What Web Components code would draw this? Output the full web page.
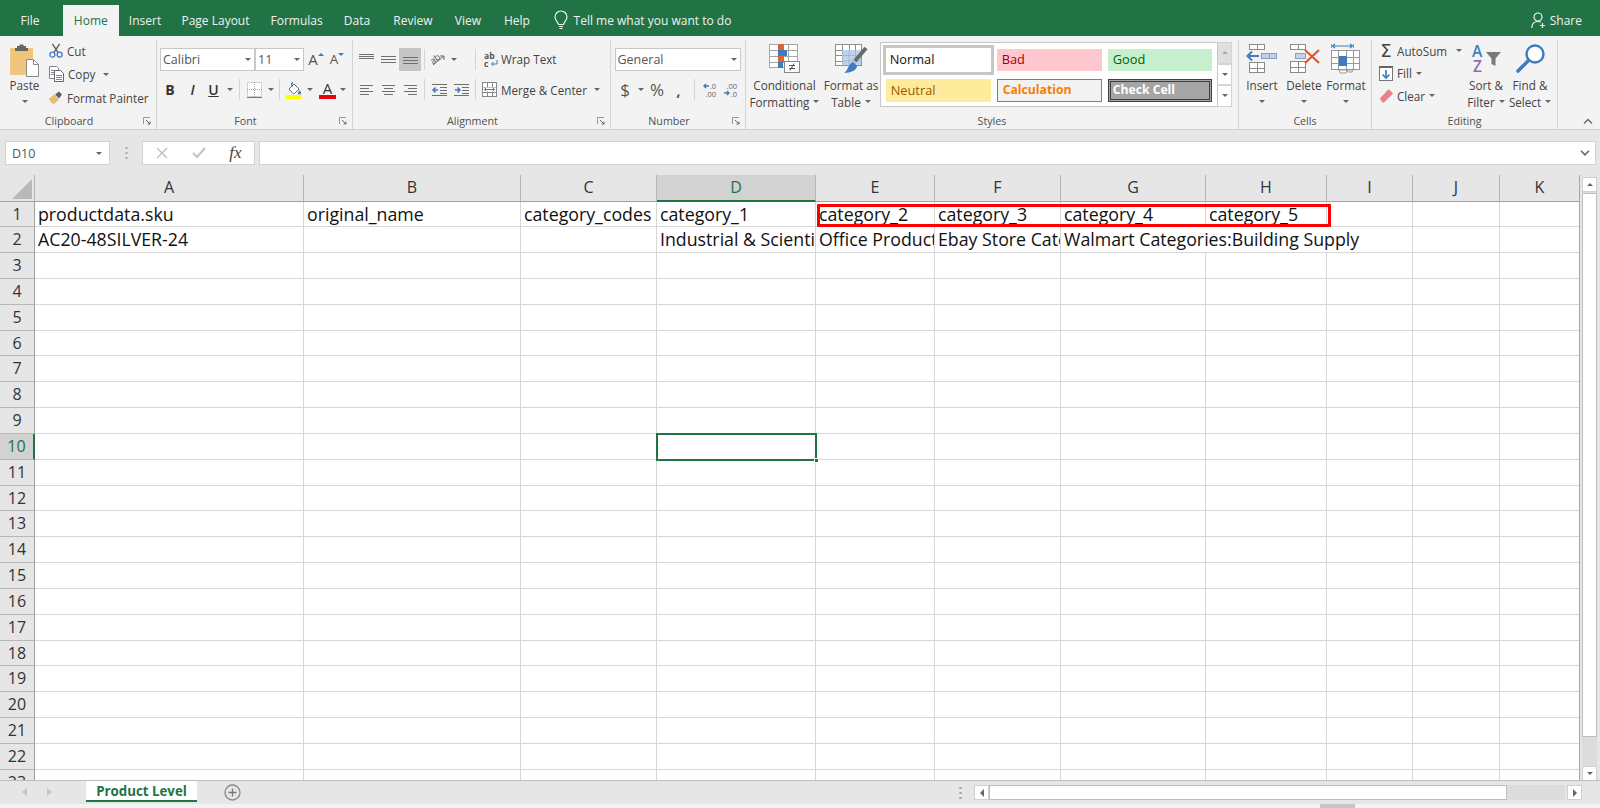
<!DOCTYPE html>
<html>
<head>
<meta charset="utf-8">
<title>Excel</title>
<style>
  html, body { margin: 0; height: 100%; overflow: hidden; background: #e6e6e6; }
  body { display: flex; flex-direction: column; height: 808px; font-family: "Open Sans", sans-serif; }
</style>
</head>
<body>
<xl-titlebar></xl-titlebar>
<xl-ribbon></xl-ribbon>
<xl-formula-bar></xl-formula-bar>
<xl-sheet></xl-sheet>
<xl-tabbar></xl-tabbar>
<xl-statusbar></xl-statusbar>

<script>
const BL = '#3f7cbf';
const tbl = (x, y, w, h, cols, rows, stroke = '#8a8a8a') => {
  let s = `<rect x="${x + .5}" y="${y + .5}" width="${w - 1}" height="${h - 1}" fill="#fff" stroke="${stroke}"/>`;
  for (let i = 1; i < cols; i++) s += `<path d="M${x + Math.round(i * w / cols) + .5} ${y}v${h}" stroke="${stroke}"/>`;
  for (let i = 1; i < rows; i++) s += `<path d="M${x} ${y + Math.round(i * h / rows) + .5}h${w}" stroke="${stroke}"/>`;
  return s;
};
const lines = (arr) => arr.map(([x, y, l]) => `<path d="M${x} ${y + .5}h${l}" stroke="#6f6f6f"/>`).join('');

const ICONS = {
  paste: [30, 33, `<rect x="0" y="4" width="23" height="27" rx="1" fill="#efc67c"/><path d="M7 4V2h2.500V.5h4V2H16v2h2v3H5V4z" fill="#666"/><path d="M16.500 15.500h7l5 5v12h-12z" fill="#fff" stroke="#8a8a8a"/><path d="M23.500 15.500v5h5" fill="none" stroke="#8a8a8a"/>`],
  cut: [14, 15, `<circle cx="3.400" cy="11.600" r="2.500" fill="none" stroke="${BL}" stroke-width="1.300"/><circle cx="10.600" cy="11.600" r="2.500" fill="none" stroke="${BL}" stroke-width="1.300"/><path d="M5 9.400 10.600.8M9 9.400 3.400.8" stroke="#5a5a5a" stroke-width="1.300"/>`],
  copy: [15, 16, `<path d="M.5.5h7l2 2v10h-9z" fill="#fff" stroke="#858585"/><path d="M5.500 4.500h6l3 3v8h-9z" fill="#fff" stroke="#666"/><path d="M7 9.500h6M7 11.500h6M7 13.500h6M2 4.500h3M2 6.500h3M2 8.500h3" stroke="#6d8fb5"/>`],
  painter: [16, 15, `<path d="M.5 9 6 4.500l5 5L5.500 14.500l-1.500-2-1 1-.5-2.500z" fill="#e9bb73"/><path d="M7 4.500 11 1.500l3 3-3 4z" fill="#5f5f5f"/>`],
  borders: [15, 16, `<rect x=".5" y=".5" width="14" height="14" fill="#fff" stroke="#aaa" stroke-dasharray="1 1"/><path d="M7.500 0v15M0 7.500h15" stroke="#999" stroke-dasharray="1 1"/><path d="M0 15.500h15" stroke="#777"/>`],
  fill: [16, 18, `<path d="M3 8 8 3l5 5-4.500 4.500a1 1 0 0 1-1.500 0z" fill="#fff" stroke="#666"/><path d="M7 1.500c-2 .5-2 3 0 4" fill="none" stroke="#3f7cbf" stroke-width="1.300"/><path d="M13.500 9c1 1.500 1.500 2.200 1.500 3a1.500 1.500 0 0 1-3 0c0-.8.5-1.500 1.500-3z" fill="${BL}"/><rect y="14" width="16" height="4" fill="#ff0"/>`],
  fontcolor: [17, 18, `<text x="8.500" y="12.500" text-anchor="middle" font-size="15" fill="#333">A</text><rect y="14" width="17" height="4" fill="#e8000c"/>`],
  alignTop: [15, 10, lines([[0, 0, 15], [0, 2, 15], [0, 4, 15]])],
  alignMid: [15, 10, lines([[0, 2, 15], [0, 5, 15], [0, 8, 15]])],
  alignBot: [15, 10, lines([[0, 3, 15], [0, 6, 15], [0, 9, 15]])],
  left: [13, 10, lines([[0, 0, 13], [0, 3, 9], [0, 6, 13], [0, 9, 9]])],
  center: [13, 10, lines([[0, 0, 13], [2, 3, 9], [0, 6, 13], [2, 9, 9]])],
  right: [13, 10, lines([[0, 0, 13], [4, 3, 9], [0, 6, 13], [4, 9, 9]])],
  outdent: [15, 12, lines([[0, 0, 15], [8, 3, 7], [8, 6, 7], [8, 9, 7], [0, 11, 15]]) + `<path d="M6 6H1m2.500-2.500L1 6l2.500 2.500" fill="none" stroke="${BL}" stroke-width="1.500"/>`],
  indent: [15, 12, lines([[0, 0, 15], [8, 3, 7], [8, 6, 7], [8, 9, 7], [0, 11, 15]]) + `<path d="M1 6h5M3.500 3.500 6 6 3.500 8.500" fill="none" stroke="${BL}" stroke-width="1.500"/>`],
  orient: [16, 14, `<text x="0" y="9" font-size="9" fill="#555" transform="rotate(-38 6 8)">ab</text><path d="M2 13 13 4m0 0H9m4 0v4" fill="none" stroke="#666"/>`],
  wrap: [14, 15, `<text x="0" y="7" font-size="8.500" font-weight="700" fill="#555">ab</text><text x="0" y="15" font-size="8.500" font-weight="700" fill="#555">c</text><path d="M13 8v4H7.500m2-2-2 2 2 2" fill="none" stroke="${BL}"/>`],
  merge: [15, 15, tbl(0, 0, 15, 15, 3, 3, '#888') + `<rect x="1" y="5.500" width="13" height="4" fill="#fff"/><path d="M2.500 7.500h10M4 6 2.500 7.500 4 9M11 6l1.500 1.500L11 9" fill="none" stroke="${BL}"/>`],
  incdec: [14, 15, `<text x="14" y="7" text-anchor="end" font-size="7.500" fill="#666">.0</text><text x="14" y="14.500" text-anchor="end" font-size="7.500" fill="#666">.00</text><path d="M7 4H2M4 2 2 4l2 2" fill="none" stroke="${BL}" stroke-width="1.400"/>`],
  decdec: [14, 15, `<text x="14" y="7" text-anchor="end" font-size="7.500" fill="#666">.00</text><text x="14" y="14.500" text-anchor="end" font-size="7.500" fill="#666">.0</text><path d="M1 11h5M4 9l2 2-2 2" fill="none" stroke="${BL}" stroke-width="1.400"/>`],
  cond: [31, 29, tbl(0, 0, 29, 24, 3, 4, '#a5a5a5') + `<rect x="9" y="0" width="6" height="6" fill="#d9643a"/><rect x="9" y="6" width="9" height="6" fill="${BL}"/><rect x="9" y="12" width="6" height="6" fill="#d9643a"/><rect x="9" y="18" width="5" height="6" fill="${BL}"/><rect x="15.500" y="17.500" width="15" height="11" fill="#fff" stroke="#888"/><path d="M20 21.500h6M20 24.500h6M25 19.500l-4 7" stroke="#555" fill="none"/>`],
  table: [32, 29, tbl(0, 0, 27, 22, 4, 4, '#8f8f8f') + `<rect x="7" y="6" width="19" height="15" fill="#c0d3ea"/><path d="M7.500 6v16M14 6v16M20.500 6v16M7 11.500h20M7 17h20" stroke="#a3b7cf"/><path d="M31 4 20 17" stroke="#6a6a6a" stroke-width="4"/><path d="M9 29c4-2 4-9 9-11l4 4c0 4-6 7-13 7z" fill="${BL}"/>`],
  insert: [32, 30, tbl(3, 0, 16, 6, 2, 1) + tbl(15, 9, 16, 6, 2, 1, '#8aa0b8').replace('fill="#fff"', 'fill="#c0d3ea"') + tbl(3, 18, 16, 11, 2, 2) + `<path d="M13 12H1.500M6 7.500 1.500 12 6 16.500" fill="none" stroke="${BL}" stroke-width="2"/>`],
  del: [33, 30, tbl(2, 0, 16, 6, 2, 1) + tbl(7, 9, 11, 6, 1, 1, '#8aa0b8').replace('fill="#fff"', 'fill="#c0d3ea"') + tbl(2, 17, 16, 12, 2, 2) + `<path d="m17 6 14 13M31 6 17 19" stroke="#d9532b" stroke-width="2"/>`],
  format: [30, 30, `<path d="M1.500 2h20M4 0 1.500 2 4 4M19 0l2.500 2L19 4" fill="none" stroke="${BL}" stroke-width="1.200"/><path d="M.5 0v4M22.500 0v4" stroke="#999"/>` + tbl(0, 6, 29, 20, 4, 3, '#999') + `<rect x="8" y="12" width="8" height="10" fill="${BL}"/><path d="M8 26h8l-1 3H9zM16 26h6l-1 2h-4z" fill="#fff" stroke="#999"/>`],
  sigma: [14, 15, `<text x="7" y="14" text-anchor="middle" font-family="DejaVu Sans" font-size="18" fill="#444">Σ</text>`],
  filldown: [14, 15, `<rect x=".5" y=".5" width="13" height="14" fill="#fff" stroke="#777"/><rect width="14" height="2" fill="#666"/><path d="M7 4v8M3.500 8.500 7 12l3.500-3.500" fill="none" stroke="${BL}" stroke-width="1.700"/>`],
  eraser: [14, 14, `<path d="M.8 9.500 9 .8a1 1 0 0 1 1.400 0l3 3a1 1 0 0 1 0 1.400L5 13.500H3.500z" fill="#e9808f"/>`],
  sort: [29, 29, `<text x="0" y="12.500" font-size="15.500" font-weight="600" fill="${BL}">A</text><text x="1" y="28" font-size="15.500" font-weight="600" fill="#9069b8">Z</text><path d="M14 8h15l-5.500 6.500V22l-4-2v-5.500z" fill="#7a7a7a"/>`],
  find: [30, 30, `<circle cx="20" cy="10" r="8.500" fill="#fff" stroke="${BL}" stroke-width="2.400"/><path d="M13.500 16.500 3 27" stroke="${BL}" stroke-width="3.600" stroke-linecap="round"/>`],
  bulb: [14, 19, `<path d="M4.500 13.500C4 11 1 9.500 1 6a6 6 0 0 1 12 0c0 3.500-3 5-3.500 7.500z" fill="none" stroke="#f2f2f2" stroke-width="1.200"/><path d="M5 15.500h4M5.500 17.500h3" stroke="#f2f2f2" stroke-width="1.200"/>`],
  share: [15, 17, `<circle cx="7" cy="5" r="4" fill="none" stroke="#f2f2f2" stroke-width="1.200"/><path d="M.8 16c0-4 2-6.500 6.200-6.500 1 0 2 .2 2.800.6" fill="none" stroke="#f2f2f2" stroke-width="1.200"/><path d="M11.500 11v5M9 13.500h5" stroke="#f2f2f2" stroke-width="1.200"/>`],
  launcher: [8, 8, `<path d="M.5 7V.5H7" fill="none" stroke="#999"/><path d="M3 3l4 4M7 4.500V7H4.500" fill="none" stroke="#666"/>`],
};

class XlBase extends HTMLElement {
  connectedCallback() {
    if (this.shadowRoot) return;
    this.attachShadow({ mode: 'open' });
    this.shadowRoot.innerHTML = `<style>${this.constructor.css}</style>${this.markup()}`;
  }
  markup() { return '<slot></slot>'; }
}

class XlIcon extends XlBase {
  static css = `:host { display: inline-flex; flex: none; } svg { display: block; overflow: visible; font-family: "Open Sans", sans-serif; }`;
  markup() {
    const [w, h, body] = ICONS[this.getAttribute('name')];
    return `<svg width="${w}" height="${h}" viewBox="0 0 ${w} ${h}">${body}</svg>`;
  }
}

class XlCaret extends XlBase {
  static css = `:host { display: inline-block; flex: none; width: 0; height: 0; border: 3px solid transparent; border-top-color: #666; border-bottom: 0; }`;
  markup() { return ''; }
}

// fixed width slot in a ribbon row
class XlTool extends XlBase {
  static css = `:host { display: inline-flex; flex: none; align-items: center; justify-content: center; height: 100%; white-space: nowrap; }`;
  connectedCallback() {
    if (this.hasAttribute('w')) this.style.width = this.getAttribute('w') + 'px';
    super.connectedCallback();
  }
}

class XlSep extends XlBase {
  static css = `:host { display: block; width: 1px; height: 21px; background: #d4d4d4; }`;
  markup() { return ''; }
}

class XlGroup extends XlBase {
  static css = `:host { display: grid; grid-template-rows: 73px 14px; flex: none; border-right: 1px solid #d4d4d4; box-sizing: border-box; }
    .body { min-width: 0; }
    .foot { display: flex; align-items: center; color: #505050; font-size: 10.700px; line-height: 14px; padding-top: 1px; }
    .name { flex: 1; text-align: center; }
    .launch { flex: none; width: 18px; display: flex; justify-content: center; }`;
  connectedCallback() {
    this.style.width = this.getAttribute('w') + 'px';
    super.connectedCallback();
  }
  markup() {
    const launch = this.hasAttribute('launcher') ? '<span class="launch"><xl-icon name="launcher"></xl-icon></span>' : '';
    return `<div class="body"><slot></slot></div><div class="foot"><span class="name">${this.getAttribute('label')}</span>${launch}</div>`;
  }
}

class XlBig extends XlBase {
  static css = `:host { display: grid; grid-template-rows: 37px 16.500px 16.500px; justify-items: center; flex: none; text-align: center; white-space: nowrap; line-height: 16.500px; }
    .ic { padding-top: 4px; }
    .ln { display: flex; align-items: center; gap: 4px; }`;
  connectedCallback() {
    this.style.width = this.getAttribute('w') + 'px';
    super.connectedCallback();
  }
  markup() {
    const l1 = this.getAttribute('l1');
    const l2 = this.getAttribute('l2') || '';
    return `<div class="ic"><xl-icon name="${this.getAttribute('icon')}"></xl-icon></div>
      <div class="ln">${l1}</div><div class="ln">${l2}<xl-caret></xl-caret></div>`;
  }
}

class XlTitlebar extends XlBase {
  static css = `:host { display: flex; flex: none; height: 36px; align-items: flex-end; background: #217346; color: #f1f1f1; font-size: 12px; }
    .tab { height: 31px; display: flex; align-items: center; justify-content: center; flex: none; box-sizing: border-box; padding-bottom: 1px; }
    .on { background: #f3f3f3; color: #217346; }
    .tell { height: 31px; display: flex; align-items: center; gap: 6px; margin-left: 10px; padding-bottom: 1px; box-sizing: border-box; flex: 1; }
    .share { height: 31px; display: flex; align-items: center; gap: 4px; padding-right: 18px; box-sizing: border-box; }`;
  markup() {
    const tabs = [['File', 60], ['Home', 55.600, 'on'], ['Insert', 52.800], ['Page Layout', 88.200], ['Formulas', 74], ['Data', 46.800], ['Review', 65.200], ['View', 44.800], ['Help', 53.200]];
    return tabs.map(([t, w, c], i) => `<div class="tab ${c || ''}" style="width:${w}px;${i === 0 ? 'margin-right:3px' : ''}">${t}</div>`).join('')
      + `<div class="tell"><xl-icon name="bulb"></xl-icon><span>Tell me what you want to do</span></div>
         <div class="share"><xl-icon name="share"></xl-icon><span>Share</span></div>`;
  }
}

class XlRibbon extends XlBase {
  static css = `:host { display: flex; flex: none; box-sizing: border-box; height: 94px; padding-top: 4px; background: #f3f3f3; border-bottom: 1px solid #d2d2d2; color: #444; font-size: 11.700px; }
    .row { display: flex; align-items: center; height: 23px; }
    .two { padding-top: 7.700px; }
    .two .row + .row { margin-top: 7.800px; }
    .flexrow { display: flex; }
    .stack { display: flex; flex-direction: column; flex: none; }
    .stack .row { gap: 4px; }
    .select { display: flex; align-items: center; box-sizing: border-box; height: 23px; flex: none; background: #fff; border: 1px solid #c8c8c8; padding: 0 3px 0 2px; justify-content: space-between; color: #555; }
    .sel { background: #c6c6c6; }
    b, i, u { font-size: 14px; color: #333; }
    .big { font-size: 17px; color: #555; }
    .gallery { display: grid; grid-template-columns: 111px 108px 110px; grid-template-rows: 30px 23.300px; row-gap: 3.700px; box-sizing: border-box; width: 337px; height: 65px; margin: 1.700px 0 0 1px; padding: 2.300px 0 0 1.700px; border: 1px solid #c6c6c6; border-right: 0; background: #fff; font-size: 12.800px; flex: none; }
    .st { display: flex; align-items: center; padding-left: 5px; padding-bottom: 1px; box-sizing: border-box; }
    .normal { border: 3px solid #c6c6c6; color: #111; padding-left: 4px; }
    .bad { background: #ffc7ce; color: #9c0006; margin: 3.700px 0 3.700px 3px; }
    .good { background: #c6efce; color: #006100; margin: 3.700px 0 3.700px 6px; }
    .neutral { background: #ffeb9c; color: #9c5700; margin: 0 3px; }
    .calc { background: #f2f2f2; color: #fa7d00; font-weight: 700; font-size: 12.200px; margin-left: 3px; border: 1px solid #7f7f7f; }
    .check { background: #a5a5a5; color: #fff; font-weight: 700; font-size: 12.200px; margin-left: 6px; border: 3px double #3f3f3f; padding-left: 2px; }
    .gscroll { display: grid; grid-template-rows: 22px 21px 22px; flex: none; width: 15px; height: 65px; margin-top: 1.700px; }
    .gscroll span { display: flex; align-items: center; justify-content: center; background: #fff; border: 1px solid #d4d4d4; border-left-color: #c6c6c6; box-sizing: border-box; }
    .gscroll span:first-child { background: #dfdfdf; }
    .up { transform: rotate(180deg); }
    .tail { flex: 1; display: flex; align-items: flex-end; justify-content: flex-end; padding: 0 7px 5px 0; }
    .chev { display: block; }`;
  markup() {
    return `
    <xl-group w="157" label="Clipboard" launcher>
      <div class="flexrow">
        <xl-big w="49" icon="paste" l1="Paste"></xl-big>
        <div class="stack" style="margin-top:-1px">
          <div class="row" style="height:23.500px"><xl-icon name="cut"></xl-icon><span>Cut</span></div>
          <div class="row" style="height:23.500px"><xl-icon name="copy"></xl-icon><span>Copy</span><xl-tool w="14"><xl-caret></xl-caret></xl-tool></div>
          <div class="row" style="height:23.500px"><xl-tool w="14"><xl-icon name="painter"></xl-icon></xl-tool><span>Format Painter</span></div>
        </div>
      </div>
    </xl-group>

    <xl-group w="196" label="Font" launcher>
      <div class="two" style="padding-left:3px">
        <div class="row">
          <div class="select" style="width:95px"><span style="font-size:12.500px">Calibri</span><xl-caret></xl-caret></div>
          <div class="select" style="width:49px;margin-right:1px"><span style="font-size:12.500px">11</span><xl-caret></xl-caret></div>
          <xl-tool w="22"><span style="font-size:15px;color:#555">A</span><xl-caret class="up" style="margin:-10px 0 0 0;border-top-color:#3f7cbf"></xl-caret></xl-tool>
          <xl-tool w="20"><span style="font-size:13.500px;color:#555">A</span><xl-caret style="margin:-10px 0 0 0;border-top-color:#3f7cbf"></xl-caret></xl-tool>
        </div>
        <div class="row">
          <xl-tool w="20"><b>B</b></xl-tool>
          <xl-tool w="25"><i style="font-weight:600">I</i></xl-tool>
          <xl-tool w="17"><u style="font-weight:600">U</u></xl-tool>
          <xl-tool w="16"><xl-caret></xl-caret></xl-tool>
          <xl-tool w="2"><xl-sep></xl-sep></xl-tool>
          <xl-tool w="28"><xl-icon name="borders"></xl-icon></xl-tool>
          <xl-tool w="5"><xl-caret></xl-caret></xl-tool>
          <xl-tool w="12"><xl-sep></xl-sep></xl-tool>
          <xl-tool w="18"><xl-icon name="fill"></xl-icon></xl-tool>
          <xl-tool w="14"><xl-caret></xl-caret></xl-tool>
          <xl-tool w="20"><xl-icon name="fontcolor"></xl-icon></xl-tool>
          <xl-tool w="11"><xl-caret></xl-caret></xl-tool>
        </div>
      </div>
    </xl-group>

    <xl-group w="258" label="Alignment" launcher>
      <div class="two" style="padding-left:3px">
        <div class="row">
          <xl-tool w="21"><xl-icon name="alignTop"></xl-icon></xl-tool>
          <xl-tool w="22"><xl-icon name="alignMid"></xl-icon></xl-tool>
          <xl-tool w="22" class="sel"><xl-icon name="alignBot"></xl-icon></xl-tool>
          <xl-tool w="6"><xl-sep></xl-sep></xl-tool>
          <xl-tool w="24"><xl-icon name="orient"></xl-icon></xl-tool>
          <xl-tool w="5"><xl-caret></xl-caret></xl-tool>
          <xl-tool w="14"></xl-tool>
          <xl-tool w="10"><xl-sep></xl-sep></xl-tool>
          <xl-tool w="4"></xl-tool>
          <xl-tool w="13"><xl-icon name="wrap"></xl-icon></xl-tool>
          <span style="margin-left:4px">Wrap Text</span>
        </div>
        <div class="row">
          <xl-tool w="21"><xl-icon name="left"></xl-icon></xl-tool>
          <xl-tool w="22"><xl-icon name="center"></xl-icon></xl-tool>
          <xl-tool w="22"><xl-icon name="right"></xl-icon></xl-tool>
          <xl-tool w="6"><xl-sep></xl-sep></xl-tool>
          <xl-tool w="25"><xl-icon name="outdent"></xl-icon></xl-tool>
          <xl-tool w="18"><xl-icon name="indent"></xl-icon></xl-tool>
          <xl-tool w="10"><xl-sep></xl-sep></xl-tool>
          <xl-tool w="2"></xl-tool>
          <xl-tool w="15"><xl-icon name="merge"></xl-icon></xl-tool>
          <span style="margin-left:4px;white-space:nowrap">Merge &amp; Center</span>
          <xl-tool w="21"><xl-caret></xl-caret></xl-tool>
        </div>
      </div>
    </xl-group>

    <xl-group w="135" label="Number" launcher>
      <div class="two" style="padding-left:3.500px">
        <div class="row">
          <div class="select" style="width:126px"><span style="font-size:12.500px">General</span><xl-caret></xl-caret></div>
        </div>
        <div class="row">
          <xl-tool w="21"><span class="big">$</span></xl-tool>
          <xl-tool w="11"><xl-caret></xl-caret></xl-tool>
          <xl-tool w="21"><span class="big">%</span></xl-tool>
          <xl-tool w="22"><b style="font-size:15px;color:#555">,</b></xl-tool>
          <xl-tool w="9"><xl-sep></xl-sep></xl-tool>
          <xl-tool w="20"><xl-icon name="incdec"></xl-icon></xl-tool>
          <xl-tool w="23"><xl-icon name="decdec"></xl-icon></xl-tool>
        </div>
      </div>
    </xl-group>

    <xl-group w="493" label="Styles">
      <div class="flexrow">
        <xl-big w="77" icon="cond" l1="Conditional" l2="Formatting"></xl-big>
        <xl-big w="56" icon="table" l1="Format as" l2="Table"></xl-big>
        <div class="gallery">
          <div class="st normal">Normal</div><div class="st bad">Bad</div><div class="st good">Good</div>
          <div class="st neutral">Neutral</div><div class="st calc">Calculation</div><div class="st check">Check Cell</div>
        </div>
        <div class="gscroll">
          <span><xl-caret class="up" style="border-top-color:#aaa"></xl-caret></span>
          <span><xl-caret></xl-caret></span>
          <span><xl-caret></xl-caret></span>
        </div>
      </div>
    </xl-group>

    <xl-group w="133" label="Cells">
      <div class="flexrow" style="padding-left:2px">
        <xl-big w="42" icon="insert" l1="Insert"></xl-big>
        <xl-big w="42" icon="del" l1="Delete"></xl-big>
        <xl-big w="42" icon="format" l1="Format"></xl-big>
      </div>
    </xl-group>

    <xl-group w="186" label="Editing">
      <div class="flexrow" style="padding-left:7px">
        <div class="stack" style="width:86px;margin-top:-.5px">
          <div class="row" style="height:22.500px"><xl-icon name="sigma"></xl-icon><span>AutoSum</span><xl-tool w="16"><xl-caret></xl-caret></xl-tool></div>
          <div class="row" style="height:22.500px"><xl-icon name="filldown"></xl-icon><span>Fill</span><xl-caret></xl-caret></div>
          <div class="row" style="height:22.500px"><xl-icon name="eraser"></xl-icon><span>Clear</span><xl-caret></xl-caret></div>
        </div>
        <xl-big w="42" icon="sort" l1="Sort &amp;" l2="Filter"></xl-big>
        <xl-big w="46" icon="find" l1="Find &amp;" l2="Select"></xl-big>
      </div>
    </xl-group>

    <div class="tail"><svg class="chev" width="10" height="6" viewBox="0 0 10 6"><path d="M1 5.500 5 1.500l4 4" fill="none" stroke="#666" stroke-width="1.300"/></svg></div>`;
  }
}

class XlFormulaBar extends XlBase {
  static css = `:host { display: flex; flex: none; box-sizing: border-box; height: 45px; padding: 11px 4px 0 5px; background: #e6e6e6; color: #555; font-size: 12.500px; }
    .box { display: flex; align-items: center; box-sizing: border-box; height: 24px; background: #fff; border: 1px solid #d2d2d2; flex: none; }
    .name { width: 105px; padding: 0 7px 0 6px; justify-content: space-between; }
    .dots { width: 32px; flex: none; height: 24px; display: flex; align-items: center; justify-content: center; }
    .btns { width: 113px; }
    .btns span { display: flex; justify-content: center; width: 37px; }
    .fx { font: italic 17px "Liberation Serif", serif; color: #444; }
    .input { flex: 1; margin-left: 3.500px; justify-content: flex-end; padding-right: 5px; }`;
  markup() {
    return `<div class="box name"><span>D10</span><xl-caret></xl-caret></div>
      <div class="dots"><svg width="3" height="12"><path d="M1.500 0v2M1.500 5v2M1.500 10v2" stroke="#aaa" stroke-width="2"/></svg></div>
      <div class="box btns">
        <span><svg width="12" height="12"><path d="m1 1 10 10M11 1 1 11" stroke="#c2c2c2" stroke-width="1.500"/></svg></span>
        <span><svg width="14" height="12"><path d="m1 6 4 4 8-9" fill="none" stroke="#c2c2c2" stroke-width="2"/></svg></span>
        <span class="fx">fx</span>
      </div>
      <div class="box input"><svg width="10" height="6"><path d="m1 .8 4 4 4-4" fill="none" stroke="#666" stroke-width="1.600"/></svg></div>`;
  }
}

class XlSheet extends XlBase {
  static css = `:host { display: flex; flex: 1; min-height: 0; background: #e6e6e6; overflow: hidden; }
    .grid { display: grid; flex: none; width: 1580px; align-self: stretch; overflow: hidden; font-family: "Open Sans", sans-serif;
      grid-template-columns: 35px 269px 217px 136px 159px 119px 126px 145px 121px 86px 87px 80px;
      grid-template-rows: 26.500px; grid-auto-rows: 25.840px; background: #fff; box-sizing: border-box; border-right: 1px solid #a8a8a8; }
    .c { box-sizing: border-box; border-right: 1px solid #d6d6d6; border-bottom: 1px solid #d6d6d6; font-size: 17.750px; line-height: 25px; padding-left: 3px; white-space: nowrap; overflow: hidden; color: #111; }
    .ch, .rh { background: #e6e6e6; color: #333; text-align: center; padding: 0; font-size: 16px; }
    .ch { border-right-color: #b4b4b4; border-bottom-color: #a0a0a0; }
    .rh { border-right-color: #a0a0a0; border-bottom-color: #b8b8b8; }
    .corner { display: flex; align-items: flex-end; justify-content: flex-end; padding: 0 2px 2px 0; background: #e6e6e6; border-right-color: #b4b4b4; border-bottom-color: #a0a0a0; }
    .hot { background: #d2d2d2; color: #217346; border-bottom: 2px solid #217346; }
    .hotr { background: #d2d2d2; color: #217346; border-right: 2px solid #217346; }
    .sel { grid-column: 5; grid-row: 11; margin: -1px; border: 2px solid #217346; position: relative; box-sizing: border-box; }
    .sel::after { content: ""; position: absolute; right: -4px; bottom: -4px; width: 5px; height: 5px; background: #217346; border: 1px solid #fff; box-sizing: border-box; }
    .mark { grid-column: 6 / 10; grid-row: 2; margin: 2px -4px 0 1px; border: 3px solid #f00; border-radius: 1px; box-sizing: border-box; }
    .vbar { flex: none; display: flex; flex-direction: column; width: 15px; margin: 2px 0 0 2px; height: 603.500px; background: #dcdcdc; }
    .vbar .b { flex: none; height: 15px; display: flex; align-items: center; justify-content: center; background: #fff; border: 1px solid #d0d0d0; box-sizing: border-box; }
    .vbar .thumb { flex: none; height: 544px; margin-top: 1px; background: #fff; border: 1px solid #bdbdbd; box-sizing: border-box; }
    .vbar .gap { flex: 1; }
    .up { transform: rotate(180deg); }`;
  markup() {
    const cols = 'ABCDEFGHIJK'.split('');
    let h = '<div class="grid"><div class="c corner" style="grid-area:1/1"><svg width="20" height="20"><path d="M20 0v20H0z" fill="#b9b9b9"/></svg></div>';
    cols.forEach((c, i) => { h += `<div class="c ch ${c === 'D' ? 'hot' : ''}" style="grid-area:1/${i + 2}">${c}</div>`; });
    const data = {
      1: ['productdata.sku', 'original_name', 'category_codes', 'category_1', 'category_2', 'category_3', 'category_4', 'category_5', '', '', ''],
      2: ['AC20-48SILVER-24', '', '', 'Industrial &amp; Scientific', 'Office Products', 'Ebay Store Categories', 'Walmart Categories:Building Supply', null, null, '', ''],
    };
    for (let r = 1; r <= 23; r++) {
      h += `<div class="c rh ${r === 10 ? 'hotr' : ''}" style="grid-area:${r + 1}/1">${r}</div>`;
      const row = data[r] || cols.map(() => '');
      row.forEach((v, i) => {
        if (v === null) return;
        const span = r === 2 && i === 6 ? ' / span 3' : '';
        h += `<div class="c" style="grid-row:${r + 1};grid-column:${i + 2}${span}">${v}</div>`;
      });
    }
    h += '<div class="mark"></div><div class="sel"></div></div>';
    return h + `<div class="vbar">
      <div class="b"><xl-caret class="up"></xl-caret></div>
      <div class="thumb"></div><div class="gap"></div>
      <div class="b"><xl-caret></xl-caret></div></div>`;
  }
}

class XlTabbar extends XlBase {
  static css = `:host { display: flex; flex: none; height: 24px; box-sizing: border-box; background: #e6e6e6; border-top: 1px solid #bdbdbd; align-items: flex-start; }
    .nav { display: flex; flex: none; width: 86px; height: 22px; align-items: center; justify-content: flex-start; gap: 20px; padding-left: 22px; box-sizing: border-box; }
    .tab { flex: none; width: 111px; height: 21px; box-sizing: border-box; background: #fff; border-bottom: 2px solid #217346; color: #217346; font-weight: 700; font-size: 13.300px; display: flex; align-items: center; justify-content: center; }
    .plus { flex: none; margin: 3px 0 0 27px; }
    .dots { margin: 6px 12px 0 auto; flex: none; }
    .hs { flex: none; display: flex; width: 608px; height: 15px; margin: 4px 18px 0 0; }
    .b { flex: none; width: 15px; background: #fff; border: 1px solid #d0d0d0; box-sizing: border-box; display: flex; align-items: center; justify-content: center; }
    .thumb { flex: none; width: 518px; background: #fff; border: 1px solid #bdbdbd; box-sizing: border-box; }
    .track { flex: 1; background: #dcdcdc; margin-right: 2px; }`;
  markup() {
    return `<div class="nav">
        <svg width="5" height="8"><path d="M5 0v8L0 4z" fill="#c6c6c6"/></svg>
        <svg width="5" height="8"><path d="M0 0v8l5-4z" fill="#c6c6c6"/></svg>
      </div>
      <div class="tab">Product Level</div>
      <svg class="plus" width="17" height="17"><circle cx="8.500" cy="8.500" r="7.500" fill="none" stroke="#8a8a8a" stroke-width="1.300"/><path d="M8.500 4.500v8M4.500 8.500h8" stroke="#777" stroke-width="1.300"/></svg>
      <svg class="dots" width="3" height="13"><path d="M1.500 0v2M1.500 5v2M1.500 10v2" stroke="#aaa" stroke-width="2.500"/></svg>
      <div class="hs">
        <div class="b"><svg width="4" height="8"><path d="M4 0v8L0 4z" fill="#666"/></svg></div>
        <div class="thumb"></div><div class="track"></div>
        <div class="b"><svg width="4" height="8"><path d="M0 0v8l4-4z" fill="#666"/></svg></div>
      </div>`;
  }
}

class XlStatusbar extends XlBase {
  static css = `:host { display: flex; flex: none; height: 4px; background: #f3f3f3; }
    .grip { width: 35px; margin-left: 1320px; background: #c6c6c6; }`;
  markup() { return '<div class="grip"></div>'; }
}

customElements.define('xl-icon', XlIcon);
customElements.define('xl-caret', XlCaret);
customElements.define('xl-tool', XlTool);
customElements.define('xl-sep', XlSep);
customElements.define('xl-group', XlGroup);
customElements.define('xl-big', XlBig);
customElements.define('xl-titlebar', XlTitlebar);
customElements.define('xl-ribbon', XlRibbon);
customElements.define('xl-formula-bar', XlFormulaBar);
customElements.define('xl-sheet', XlSheet);
customElements.define('xl-tabbar', XlTabbar);
customElements.define('xl-statusbar', XlStatusbar);
</script>
</body>
</html>
